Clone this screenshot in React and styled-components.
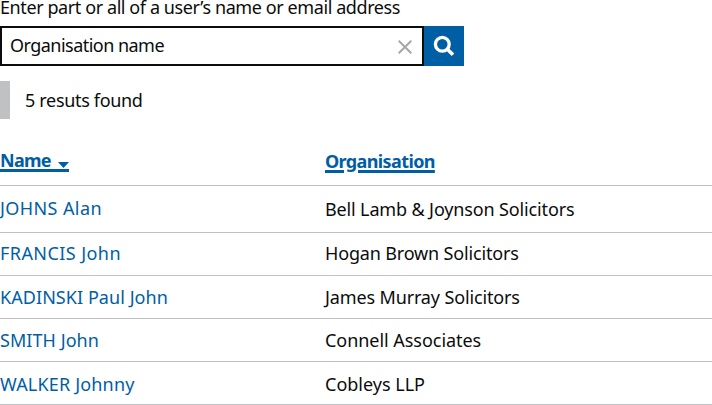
import React from "react";
import styled, { createGlobalStyle } from "styled-components";

const GlobalStyle = createGlobalStyle`
  *, *::before, *::after { box-sizing: border-box; }
  html, body { margin: 0; background: #fff; overflow: hidden; }
  body {
    color: #0b0c0c;
    font: 18px/24px "Noto Sans", sans-serif;
  }
`;

const Page = styled.main`
  display: flow-root;
  width: 712px;
  height: 405px;
`;

const Label = styled.label`
  display: block;
  height: 26px;
  line-height: 14px;
  letter-spacing: -0.41px;
  white-space: nowrap;
`;

const SearchForm = styled.form`
  display: flex;
  width: 464px;
  height: 40px;
`;

const SearchField = styled.div`
  display: flex;
  flex: 1;
  align-items: flex-start;
  justify-content: space-between;
  padding: 5px 10px 0 8px;
  border: 2px solid #0b0c0c;
`;

const FieldValue = styled.span`
  letter-spacing: -0.53px;
`;

const IconButton = styled.button`
  display: flex;
  padding: 0;
  border: 0;
  background: none;
  color: inherit;
`;

const ClearButton = styled(IconButton)`
  margin-top: 7px;
  color: #a6a6a6;
`;

const SubmitButton = styled(IconButton)`
  width: 40px;
  background: #005ea5;
  color: #fff;
`;

const Results = styled.p`
  margin: 15px 0 0;
  height: 38px;
  padding: 7px 0 0 15px;
  border-left: 10px solid #bfc1c3;
  letter-spacing: -0.33px;
`;

const Table = styled.div`
  display: flex;
  flex-direction: column;
  margin-top: 19px;
`;

const Row = styled.div`
  display: grid;
  grid-template-columns: 325px 1fr;
  height: ${(p) => p.$height}px;
  border-bottom: 1px solid #bfc1c3;
  align-items: start;
`;

const Cell = styled.div`
  padding-top: ${(p) => p.$top}px;
  letter-spacing: ${(p) => p.$tracking}px;
  white-space: nowrap;
`;

const NameLink = styled.a`
  color: #005ea5;
`;

const SortLink = styled.a`
  display: flex;
  width: fit-content;
  height: 24px;
  align-items: flex-start;
  color: #005ea5;
  font-weight: 700;
  border-bottom: 3px solid #005ea5;
`;

const SortArrow = styled.svg`
  display: block;
  margin: 14px 0 0 7.5px;
`;

const HeadingLink = styled.a`
  color: #005ea5;
  font-weight: 700;
  text-decoration: underline 3px;
  text-underline-offset: 2px;
`;

const rows = [
  { name: "JOHNS Alan", org: "Bell Lamb & Joynson Solicitors", height: 47, top: 10, orgTop: 11, nameTracking: 0.4, orgTracking: -0.14 },
  { name: "FRANCIS John", org: "Hogan Brown Solicitors", height: 43, top: 8, orgTop: 8, nameTracking: 0.43, orgTracking: -0.16 },
  { name: "KADINSKI Paul John", org: "James Murray Solicitors", height: 43, top: 9, orgTop: 9, nameTracking: 0.06, orgTracking: -0.14 },
  { name: "SMITH John", org: "Connell Associates", height: 43, top: 9, orgTop: 9, nameTracking: 0.06, orgTracking: -0.04 },
  { name: "WALKER Johnny", org: "Cobleys LLP", height: 43, top: 10, orgTop: 10, nameTracking: 0.17, orgTracking: 0 },
];

export default function App() {
  return (
    <>
      <GlobalStyle />
      <Page>
        <Label>Enter part or all of a user’s name or email address</Label>
        <SearchForm>
          <SearchField>
            <FieldValue>Organisation name</FieldValue>
            <ClearButton type="button" aria-label="Clear">
              <svg width="14" height="14" viewBox="0 0 14 14" fill="none" stroke="currentColor" strokeWidth="2">
                <path d="M.7.7l12.6 12.6M13.3.7L.7 13.3" />
              </svg>
            </ClearButton>
          </SearchField>
          <SubmitButton type="button" aria-label="Search">
            <svg width="40" height="40" viewBox="0 0 40 40" fill="none" stroke="currentColor">
              <circle cx="18.3" cy="18.2" r="6.9" strokeWidth="3.3" />
              <path d="M22.8 22.8l6.2 6" strokeWidth="3.6" />
            </svg>
          </SubmitButton>
        </SearchForm>
        <Results>5 resuts found</Results>
        <Table>
          <Row $height={48}>
            <Cell $top={10} $tracking={-0.7}>
              <SortLink>
                Name
                <SortArrow width="11" height="6" viewBox="0 0 11 6" fill="currentColor">
                  <path d="M0 0h11L5.5 6z" />
                </SortArrow>
              </SortLink>
            </Cell>
            <Cell $top={11} $tracking={-0.62}>
              <HeadingLink>Organisation</HeadingLink>
            </Cell>
          </Row>
          {rows.map((r) => (
            <Row key={r.name} $height={r.height}>
              <Cell $top={r.top} $tracking={r.nameTracking}>
                <NameLink>{r.name}</NameLink>
              </Cell>
              <Cell $top={r.orgTop} $tracking={r.orgTracking}>{r.org}</Cell>
            </Row>
          ))}
        </Table>
      </Page>
    </>
  );
}
